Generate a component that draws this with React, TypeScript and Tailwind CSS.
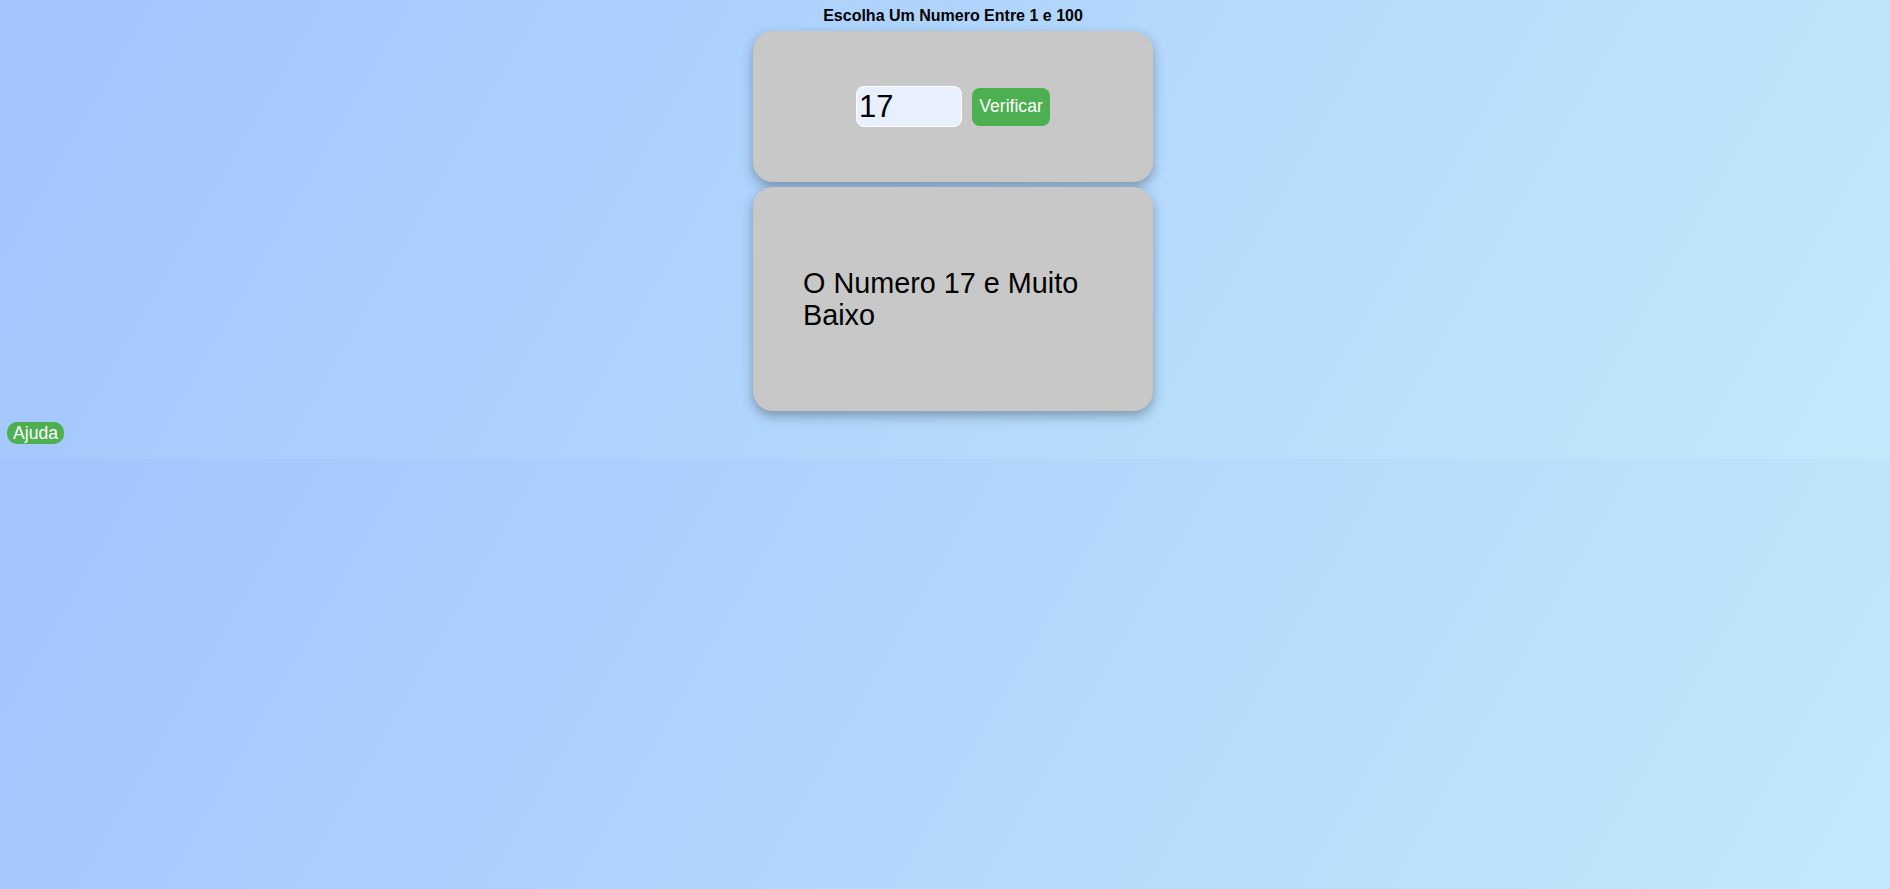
import { useState } from 'react'

export default function App() {
  const [guess, setGuess] = useState('17')

  return (
    <div className="min-h-[889px] bg-[linear-gradient(120deg,#a1c4fd_0%,#c2e9fb_100%)] bg-size-[100%_459px] bg-repeat font-['Liberation_Sans',Arial,sans-serif] text-black">
      <div className="flex flex-col items-center pl-4 pt-[7px]">
        <h1 className="text-base leading-[18px] font-bold">Escolha Um Numero Entre 1 e 100</h1>

        <div className="mt-[6px] flex h-[151px] w-[400px] items-center justify-center gap-[10px] rounded-[20px] bg-[#c8c8c8] shadow-[0_5px_12px_rgba(0,0,0,0.3)]">
          <input
            type="text"
            value={guess}
            onChange={e => setGuess(e.target.value)}
            className="h-[41px] w-[106px] rounded-[8px] border border-white bg-[#e8f0fe] px-[2px] text-[31px] leading-none outline-none"
          />
          <button className="h-[38px] w-[78px] rounded-[8px] bg-[#4caf50] text-[17.6px] text-white">
            Verificar
          </button>
        </div>

        <div className="mt-[5px] flex h-[224px] w-[400px] items-center rounded-[20px] bg-[#c8c8c8] px-[50px] shadow-[0_5px_12px_rgba(0,0,0,0.3)]">
          <p className="text-[28.8px] leading-[32px]">{`O Numero ${guess} e Muito Baixo`}</p>
        </div>
      </div>

      <div className="mt-[11px] pl-[7px]">
        <button className="h-[22px] rounded-[10px] bg-[#4caf50] px-[6px] text-[17.6px] leading-[22px] text-white">
          Ajuda
        </button>
      </div>
    </div>
  )
}
